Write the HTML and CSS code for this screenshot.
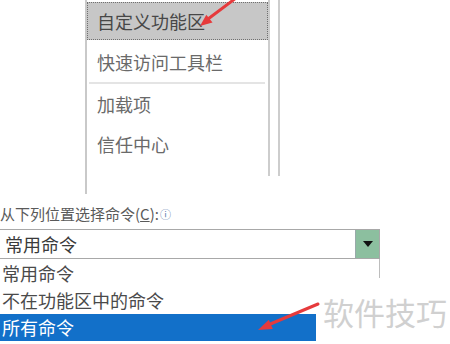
FILE: index.html
```html
<!DOCTYPE html>
<html lang="zh-CN">
<head>
    <meta charset="UTF-8">
    <meta name="viewport" content="width=device-width, initial-scale=1.0">
    <title>自定义功能区</title>
    <link rel="stylesheet" href="styles.css">
</head>
<body>
    <div class="page">
        <div class="top">
            <ul class="nav">
                <li class="nav-item active">自定义功能区</li>
                <li class="nav-item">快速访问工具栏</li>
                <li class="nav-sep"></li>
                <li class="nav-item">加载项</li>
                <li class="nav-item">信任中心</li>
            </ul>
            <div class="edge"></div>
            <div class="edge"></div>
        </div>

        <div class="label">从下列位置选择命令(<u>C</u>):<span class="info">ⓘ</span></div>

        <div class="combo">
            <span class="combo-text">常用命令</span>
            <span class="combo-btn"><span class="caret"></span></span>
        </div>
        <ul class="options">
            <li class="option">常用命令</li>
            <li class="option">不在功能区中的命令</li>
            <li class="option selected">所有命令</li>
        </ul>

        <div class="watermark">软件技巧</div>

        <!-- red annotation arrows -->
        <svg class="arrows" width="450" height="344" viewBox="0 0 450 344">
            <line x1="240" y1="-5" x2="208" y2="19" stroke="#e63a3c" stroke-width="3" stroke-linecap="round"/>
            <polygon points="200,26 212.5,22.5 206.3,14.7" fill="#e63a3c"/>
            <line x1="318" y1="304" x2="268" y2="325" stroke="#e63a3c" stroke-width="3" stroke-linecap="round"/>
            <polygon points="258,330 272.8,329 268.8,319.8" fill="#e63a3c"/>
        </svg>
    </div>
</body>
</html>
```

FILE: styles.css
```css
body {
    margin: 0;
    background: #fff;
    font-family: "Noto Sans CJK SC", "Noto Sans", sans-serif;
}
.page { position: relative; width: 450px; height: 344px; overflow: hidden; }

.top { display: flex; align-items: flex-start; padding-left: 85px; }
.nav {
    list-style: none; margin: 0; padding: 2px 0 0; width: 181px; height: 192px;
    border-left: 2px solid #c9c9c9;
}
.nav-item {
    height: 40px; line-height: 40px; padding-left: 10px;
    font-size: 18px; color: #6a6a6a; box-sizing: border-box;
}
.nav-item.active {
    height: 38px; line-height: 36px; margin-bottom: 2px; padding-left: 9px;
    background: #c7c7c7; border: 1px dotted #707070; color: #474747;
}
.nav-sep { height: 2px; background: #e4e4e4; margin: 0 3px 0 2px; }
.edge { width: 2px; height: 176px; background: #cdcdcd; margin-right: 8px; }

.label {
    margin-top: 9px; height: 22px; line-height: 22px;
    font-size: 15px; color: #5a5a5a; white-space: nowrap;
}
.info { font-size: 11px; color: #5577aa; vertical-align: top; margin-left: 1px; }

.combo {
    display: flex; align-items: stretch; width: 380px; height: 30px;
    margin-top: 4px; box-sizing: border-box; border: 1px solid #a8a8a8; border-left: none;
}
.combo-text { flex: 1; padding-left: 5px; line-height: 28px; font-size: 18px; color: #3a3a3a; }
.combo-btn {
    width: 23px; background: #8cbf9f; border-left: 1px solid #9aa;
    display: flex; align-items: center; justify-content: center;
}
.caret { width: 0; height: 0; border-left: 5px solid transparent; border-right: 5px solid transparent; border-top: 6px solid #111; }

.options {
    list-style: none; margin: 0; padding: 1px 0 0; width: 380px;
    border-right: 1px solid #bdbdbd; box-sizing: border-box;
}
.option { height: 27px; line-height: 27px; padding-left: 2px; font-size: 18px; color: #4a4a4a; white-space: nowrap; }
.option.selected { background: #1270c9; color: #fff; }

.watermark {
    position: absolute; left: 316px; top: 278px; width: 134px; height: 66px;
    background: #fff; padding: 16px 0 0 7px; box-sizing: border-box;
    font-size: 31px; line-height: 36px; color: #d0d0d0;
}
.arrows { position: absolute; left: 0; top: 0; }
```
